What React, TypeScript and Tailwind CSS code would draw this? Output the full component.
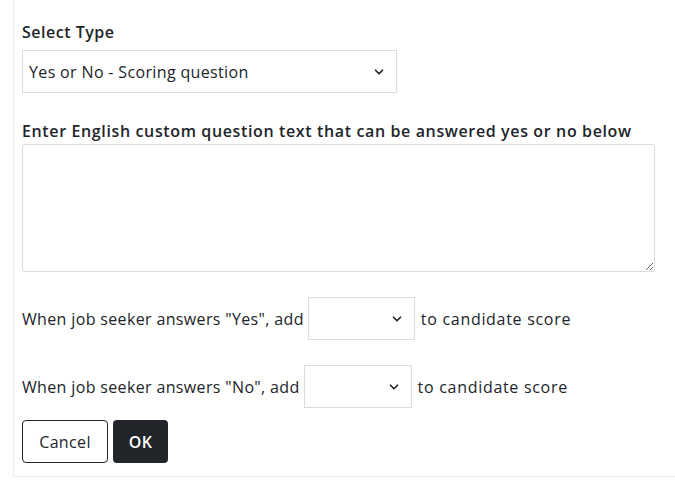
import { ChevronDown } from "lucide-react";

const font = { fontFamily: '"Open Sans", "Liberation Sans", sans-serif' };

const Select = ({ value, className }: { value?: string; className: string }) => (
  <div className={`relative border border-[#dcdcdc] bg-white h-[43px] flex items-center ${className}`}>
    <span className="pl-[6px] text-[16px] text-[#212529]">{value}</span>
    <ChevronDown className="absolute right-[10px] top-[14px] w-[14px] h-[14px] text-[#212529]" strokeWidth={3} />
  </div>
);

export default function App() {
  return (
    <div className="bg-white min-h-[482px] w-[675px] tracking-[0.35px]" style={font}>
      <div className="ml-[13px] border-l border-b border-[#ececec] pl-[8px] pr-[20px] pt-[20px] pb-[13px] text-[#212529]">
        <label className="block font-semibold text-[16px] leading-[24px] tracking-[0.5px]">Select Type</label>
        <Select value="Yes or No - Scoring question" className="mt-[6px] w-[375px]" />

        <label className="block font-semibold text-[16px] leading-[24px] mt-[26px] tracking-[0.63px]">
          Enter English custom question text that can be answered yes or no below
        </label>
        <textarea className="block mt-[1px] w-[633px] h-[128px] border border-[#dcdcdc] rounded-[3px] outline-none resize-y" />

        <div className="flex items-center mt-[25px] text-[16px]">
          <span>When job seeker answers "Yes", add</span>
          <Select className="w-[107px] ml-[4px] mr-[6px]" />
          <span className="tracking-[0.7px]">to candidate score</span>
        </div>

        <div className="flex items-center mt-[25px] text-[16px]">
          <span>When job seeker answers "No", add</span>
          <Select className="w-[108px] ml-[4px] mr-[6px]" />
          <span className="tracking-[0.7px]">to candidate score</span>
        </div>

        <div className="flex gap-[5px] mt-[12px]">
          <button className="h-[43px] w-[86px] border border-[#212529] rounded-[4px] text-[16px] text-[#212529] bg-white">
            Cancel
          </button>
          <button className="h-[43px] w-[55px] rounded-[4px] text-[16px] font-semibold text-white bg-[#212529]">
            OK
          </button>
        </div>
      </div>
    </div>
  );
}
